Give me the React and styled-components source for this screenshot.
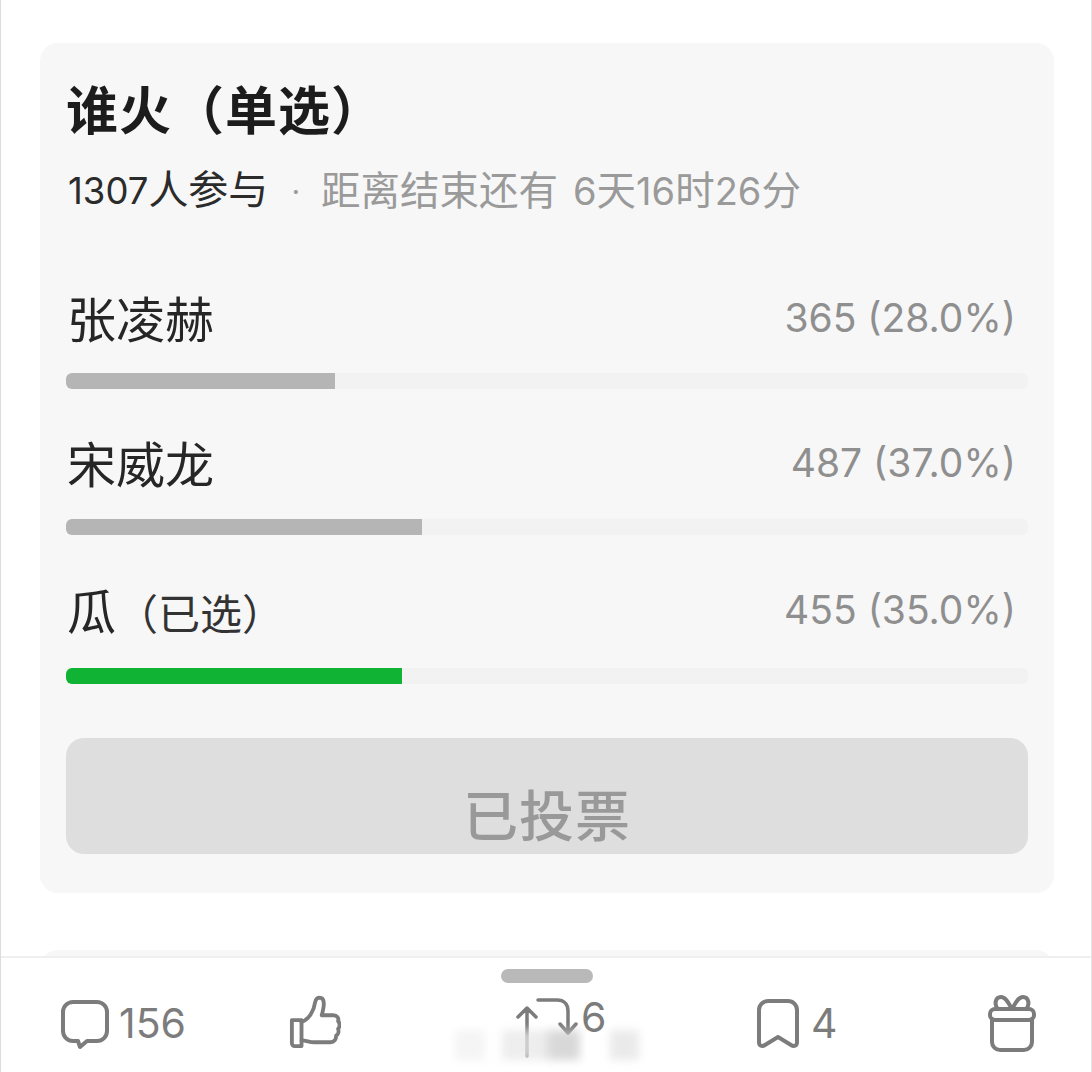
import React from "react";
import styled, { createGlobalStyle } from "styled-components";

const GlobalStyle = createGlobalStyle`
  html, body { margin: 0; padding: 0; background: #fff; }
  body { font-family: "Noto Sans CJK SC", "Noto Sans", sans-serif; }
`;

const Page = styled.div`
  position: relative;
  width: 1092px;
  height: 1072px;
  box-sizing: border-box;
  overflow: hidden;
  background: #fff;
  border-left: 1px solid #dcdcdc;
  border-right: 1px solid #e6e6e6;
  display: flex;
  flex-direction: column;
`;

const Content = styled.div`
  height: 956px;
  box-sizing: border-box;
  padding: 43px 37px 0 39px;
  overflow: hidden;
  flex: none;
`;

const Card = styled.section`
  height: 850px;
  box-sizing: border-box;
  background: #f7f7f7;
  border-radius: 18px;
  padding: 0 26px;
  display: flex;
  flex-direction: column;
`;

const NextCard = styled.div`
  height: 40px;
  margin-top: 57px;
  background: #f7f7f7;
  border-radius: 18px 18px 0 0;
`;

const Title = styled.h1`
  margin: 33px 0 0 0;
  font-size: 52px;
  letter-spacing: 1px;
  line-height: 64px;
  font-weight: 700;
  color: #1c1c1c;
`;

const Meta = styled.div`
  margin: 26px 0 0 2px;
  display: flex;
  align-items: center;
  font-family: Inter, "Noto Sans CJK SC", sans-serif;
  font-size: 38px;
  line-height: 48px;
  color: #9a9a9a;
`;

const Joined = styled.span`
  color: #2b2b2b;
  font-size: 36.5px;
`;

const Cjk = styled.span`
  font-size: ${(p) => p.$size || 39.5}px;
`;

const Dot = styled.span`
  margin: 0 21px 0 23px;
  font-size: 30px;
`;

const Remain = styled.span`
  margin-left: 15px;
`;

const Options = styled.div`
  margin-top: 73px;
  display: flex;
  flex-direction: column;
`;

const Option = styled.div`
  height: ${(p) => p.$height}px;
`;

const OptionHead = styled.div`
  display: flex;
  justify-content: space-between;
  align-items: center;
  height: 56px;
  padding-left: 1px;
`;

const Name = styled.span`
  font-size: 49px;
  color: #262626;
`;

const Tag = styled.span`
  font-size: 42px;
  color: #333;
`;

const Count = styled.span`
  font-family: Inter, "Noto Sans CJK SC", sans-serif;
  font-size: 39px;
  color: #8f8f8f;
  margin: 2px 12px 0 0;
`;

const Track = styled.div`
  margin-top: ${(p) => p.$gap}px;
  height: 16px;
  background: #f2f2f2;
  border-radius: 6px;
  overflow: hidden;
`;

const Fill = styled.div`
  height: 100%;
  background: ${(p) => (p.$active ? "#10b334" : "#b5b5b5")};
`;

const VoteButton = styled.div`
  margin-top: 54px;
  height: 116px;
  border-radius: 18px;
  background: #dedede;
  display: flex;
  align-items: flex-end;
  justify-content: center;
  font-size: 55px;
  font-weight: 500;
  line-height: 84px;
  color: #999;
  letter-spacing: 1px;
`;

const Footer = styled.footer`
  position: relative;
  flex: 1;
  box-sizing: border-box;
  border-top: 2px solid #efefef;
  display: flex;
  align-items: center;
  padding: 16px 0 0 58px;
  background: #fff;
`;

const Handle = styled.div`
  position: absolute;
  top: 11px;
  left: 500px;
  width: 92px;
  height: 14px;
  border-radius: 7px;
  background: #b9b9b9;
`;

const Action = styled.div`
  display: flex;
  align-items: center;
  gap: ${(p) => p.$gap || 0}px;
  width: ${(p) => p.$width}px;
  flex: none;
  color: #7c7c7c;
  font-size: 41px;
  line-height: 56px;
  font-family: Inter, sans-serif;
`;

const ShareCount = styled.span`
  margin: -12px 0 0 0;
`;

const Smudge = styled.div`
  position: absolute;
  left: 454px;
  top: 72px;
  width: 184px;
  height: 30px;
  background: linear-gradient(
    90deg,
    rgba(238, 238, 238, 0.6) 0 30px,
    transparent 30px 47px,
    rgba(232, 232, 232, 0.75) 47px 88px,
    rgba(200, 200, 200, 0.7) 97px 125px,
    transparent 125px 155px,
    rgba(232, 232, 232, 0.9) 155px 184px
  );
  filter: blur(4px);
`;

const Icon = styled.svg`
  flex: none;
  fill: none;
  stroke: #7c7c7c;
  stroke-width: ${(p) => p.$stroke || 4}px;
  stroke-linecap: round;
  stroke-linejoin: round;
`;

const options = [
  { name: "张凌赫", count: "365 (28.0%)", width: 269, height: 145, gap: 29 },
  { name: "宋威龙", count: "487 (37.0%)", width: 356, height: 147, gap: 30 },
  { name: "瓜", tag: "（已选）", count: "455 (35.0%)", width: 336, height: 104, gap: 32, active: true },
];

export default function App() {
  return (
    <Page>
      <GlobalStyle />
      <Content>
        <Card>
          <Title>谁火（单选）</Title>
          <Meta>
            <Joined>
              1307<Cjk $size={40}>人参与</Cjk>
            </Joined>
            <Dot>·</Dot>
            <Cjk>距离结束还有</Cjk>
            <Remain>
              6<Cjk>天</Cjk>16<Cjk>时</Cjk>26<Cjk>分</Cjk>
            </Remain>
          </Meta>
          <Options>
            {options.map((o) => (
              <Option key={o.name} $height={o.height}>
                <OptionHead>
                  <Name>
                    {o.name}
                    {o.tag && <Tag>{o.tag}</Tag>}
                  </Name>
                  <Count>{o.count}</Count>
                </OptionHead>
                <Track $gap={o.gap}>
                  <Fill $active={o.active} style={{ width: o.width }} />
                </Track>
              </Option>
            ))}
          </Options>
          <VoteButton>已投票</VoteButton>
        </Card>
        <NextCard />
      </Content>
      <Footer>
        <Handle />
        <Action $width={230} $gap={8}>
          <Icon width="52" height="54" viewBox="0 0 52 54">
            <path d="M14 6h24a10 10 0 0 1 10 10v19a10 10 0 0 1-10 10H28l-7 6-2-6h-5A10 10 0 0 1 4 35V16A10 10 0 0 1 14 6z" />
          </Icon>
          156
        </Action>
        <Action $width={226}>
          <Icon width="52" height="58" viewBox="0 0 54 58">
            <path d="M3 26h10v27H6a3 3 0 0 1-3-3z" />
            <path d="M13 28c8-3 13-12 14-20 .5-4 3-6 6-5 4 1 4 7 1 18h12c4 0 6 3 5 6 2 2 2 6 0 8 1 3 0 6-2 7 0 4-2 7-6 7H26c-5 0-8-2-13-2" />
          </Icon>
        </Action>
        <Action $width={241}>
          <Icon width="66" height="80" viewBox="0 5 66 80" $stroke={3.5}>
            <path d="M12 30v48M3 39l9-9 9 9" />
            <path d="M23 22h19c7 0 11 4 11 11v22M45 46l8 9 8-9" />
          </Icon>
          <ShareCount>6</ShareCount>
        </Action>
        <Action $width={231} $gap={11}>
          <Icon width="44" height="52" viewBox="0 0 44 52">
            <path d="M12 4h20a9 9 0 0 1 9 9v32c0 4-3 5-6 3l-13-8-13 8c-3 2-6 1-6-3V13a9 9 0 0 1 9-9z" />
          </Icon>
          4
        </Action>
        <Action $width={50}>
          <Icon width="50" height="58" viewBox="0 0 50 58">
            <path d="M5 25v23a8 8 0 0 0 8 8h24a8 8 0 0 0 8-8V25" />
            <rect x="3" y="15" width="44" height="11" rx="5" />
            <path d="M25 15c-3-5-6-12-11-12-6 0-7 8-3 12M25 15c3-5 6-12 11-12 6 0 7 8 3 12" />
          </Icon>
        </Action>
        <Smudge />
      </Footer>
    </Page>
  );
}
